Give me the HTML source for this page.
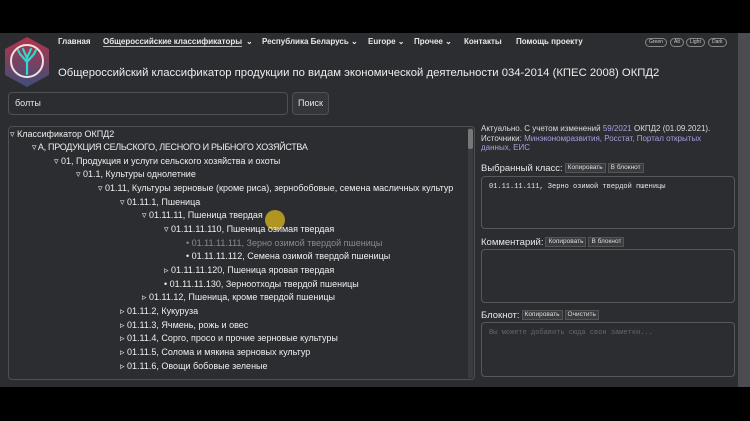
<!DOCTYPE html>
<html><head><meta charset="utf-8"><style>
*{margin:0;padding:0;box-sizing:border-box}
body{width:750px;height:421px;background:#000;font-family:"Liberation Sans","Noto Sans CJK SC",sans-serif;color:#e6e6e6;position:relative;overflow:hidden}
#page{position:absolute;left:0;top:33px;width:750px;height:354px;background:#2b2d31}
#sb{position:absolute;left:738px;top:33px;width:12px;height:354px;background:#4a4c50}
.a{position:absolute;white-space:nowrap}
.nav{top:37px;font-size:8px;font-weight:bold;color:#e8e8e8}
.pill{position:absolute;top:38px;height:9px;border:1px solid #888;border-radius:5px;font-size:5px;line-height:7px;padding:0 3px;color:#ccc}
.box{position:absolute;border:1px solid #4d5056;border-radius:4px;background:#2b2d31}
.t{position:absolute;font-size:9px;white-space:nowrap;color:#eee}
.btn{display:inline-block;background:#3a3c40;border:1px solid #555;font-size:6.5px;padding:0 2px;line-height:8px;vertical-align:middle;margin-left:2px;color:#ddd}
.lbl{position:absolute;font-size:9.5px;color:#e6e6e6;white-space:nowrap}
.mono{font-family:"Liberation Mono",monospace;font-size:7px}
</style></head><body>
<div id="page"></div><div id="sb"></div>
<svg class="a" style="left:3px;top:36px" width="48" height="52" viewBox="0 0 48 52">
<defs><linearGradient id="g" x1="0" y1="0" x2="0" y2="1"><stop offset="0" stop-color="#b4344a"/><stop offset="1" stop-color="#3c4f7a"/></linearGradient></defs>
<polygon points="24,1 46,13 46,39 24,51 2,39 2,13" fill="url(#g)"/>
<circle cx="24" cy="25" r="16" fill="none" stroke="#f3e0e0" stroke-width="2"/>
<path d="M24 38 V22 M24 26 L17 18 M24 26 L31 18 M24 22 L20 13 M24 22 L28 13 M17 18 L15 14 M31 18 L33 14" stroke="#33d6c8" stroke-width="2.2" fill="none" stroke-linecap="round"/>
</svg>
<div class="a nav" style="left:58px">Главная</div>
<div class="a nav" style="left:103px;border-bottom:1px solid #bbb">Общероссийские классификаторы</div><div class="a nav" style="left:246px">⌄</div>
<div class="a nav" style="left:262px">Республика Беларусь ⌄</div>
<div class="a nav" style="left:368px">Europe ⌄</div>
<div class="a nav" style="left:414px">Прочее ⌄</div>
<div class="a nav" style="left:464px">Контакты</div>
<div class="a nav" style="left:516px">Помощь проекту</div>
<div class="pill" style="left:645px">Green</div><div class="pill" style="left:670px">Alt</div><div class="pill" style="left:686px">Light</div><div class="pill" style="left:708px">Dark</div>
<div class="a" style="left:58px;top:67px;font-size:11.3px;color:#eee">Общероссийский классификатор продукции по видам экономической деятельности 034-2014 (КПЕС 2008) ОКПД2</div>
<div class="box" style="left:8px;top:92px;width:280px;height:23px"></div>
<div class="a" style="left:15px;top:98px;font-size:9px">болты</div>
<div class="box" style="left:292px;top:92px;width:37px;height:23px;background:#34363a"></div>
<div class="a" style="left:298px;top:98px;font-size:9px">Поиск</div>
<div class="box" style="left:8px;top:126px;width:467px;height:254px"></div>
<div class="a" style="left:468px;top:128px;width:5px;height:250px;background:#3a3c40"></div>
<div class="a" style="left:468px;top:129px;width:5px;height:20px;background:#777;border-radius:2px"></div>
<div class="t" style="left:10px;top:129px">▿ Классификатор ОКПД2</div>
<div class="t" style="left:32px;top:142px;letter-spacing:-0.3px">▿ A, ПРОДУКЦИЯ СЕЛЬСКОГО, ЛЕСНОГО И РЫБНОГО ХОЗЯЙСТВА</div>
<div class="t" style="left:54px;top:156px">▿ 01, Продукция и услуги сельского хозяйства и охоты</div>
<div class="t" style="left:76px;top:169px">▿ 01.1, Культуры однолетние</div>
<div class="t" style="left:98px;top:183px">▿ 01.11, Культуры зерновые (кроме риса), зернобобовые, семена масличных культур</div>
<div class="t" style="left:120px;top:197px">▿ 01.11.1, Пшеница</div>
<div class="t" style="left:142px;top:210px">▿ 01.11.11, Пшеница твердая</div>
<div class="a" style="left:265px;top:210px;width:20px;height:20px;border-radius:50%;background:#c9a820;opacity:.85"></div>
<div class="t" style="left:164px;top:224px">▿ 01.11.11.110, Пшеница озимая твердая</div>
<div class="t" style="left:186px;top:238px;color:#8a8a8a">• 01.11.11.111, Зерно озимой твердой пшеницы</div>
<div class="t" style="left:186px;top:251px">• 01.11.11.112, Семена озимой твердой пшеницы</div>
<div class="t" style="left:164px;top:265px">▹ 01.11.11.120, Пшеница яровая твердая</div>
<div class="t" style="left:164px;top:279px">• 01.11.11.130, Зерноотходы твердой пшеницы</div>
<div class="t" style="left:142px;top:292px">▹ 01.11.12, Пшеница, кроме твердой пшеницы</div>
<div class="t" style="left:120px;top:306px">▹ 01.11.2, Кукуруза</div>
<div class="t" style="left:120px;top:320px">▹ 01.11.3, Ячмень, рожь и овес</div>
<div class="t" style="left:120px;top:333px">▹ 01.11.4, Сорго, просо и прочие зерновые культуры</div>
<div class="t" style="left:120px;top:347px">▹ 01.11.5, Солома и мякина зерновых культур</div>
<div class="t" style="left:120px;top:361px">▹ 01.11.6, Овощи бобовые зеленые</div>
<div class="a" style="left:481px;top:124px;font-size:8px;line-height:9.5px;color:#ddd;white-space:normal;width:250px">Актуально. С учетом изменений <span style="color:#a99ee0">59/2021</span> ОКПД2 (01.09.2021).<br>Источники: <span style="color:#a99ee0">Минэкономразвития, Росстат, Портал открытых данных, ЕИС</span></div>
<div class="lbl" style="left:481px;top:163px">Выбранный класс:<span class="btn">Копировать</span><span class="btn">В блокнот</span></div>
<div class="box" style="left:481px;top:176px;width:254px;height:53px;border-color:#55585e"></div>
<div class="a mono" style="left:489px;top:183px">01.11.11.111, Зерно озимой твердой пшеницы</div>
<div class="lbl" style="left:481px;top:237px">Комментарий:<span class="btn">Копировать</span><span class="btn">В блокнот</span></div>
<div class="box" style="left:481px;top:249px;width:254px;height:54px;border-color:#55585e"></div>
<div class="lbl" style="left:481px;top:310px">Блокнот:<span class="btn">Копировать</span><span class="btn">Очистить</span></div>
<div class="box" style="left:481px;top:322px;width:254px;height:55px;border-color:#55585e"></div>
<div class="a mono" style="left:489px;top:329px;color:#666">Вы можете добавить сюда свои заметки...</div>
</body></html>
